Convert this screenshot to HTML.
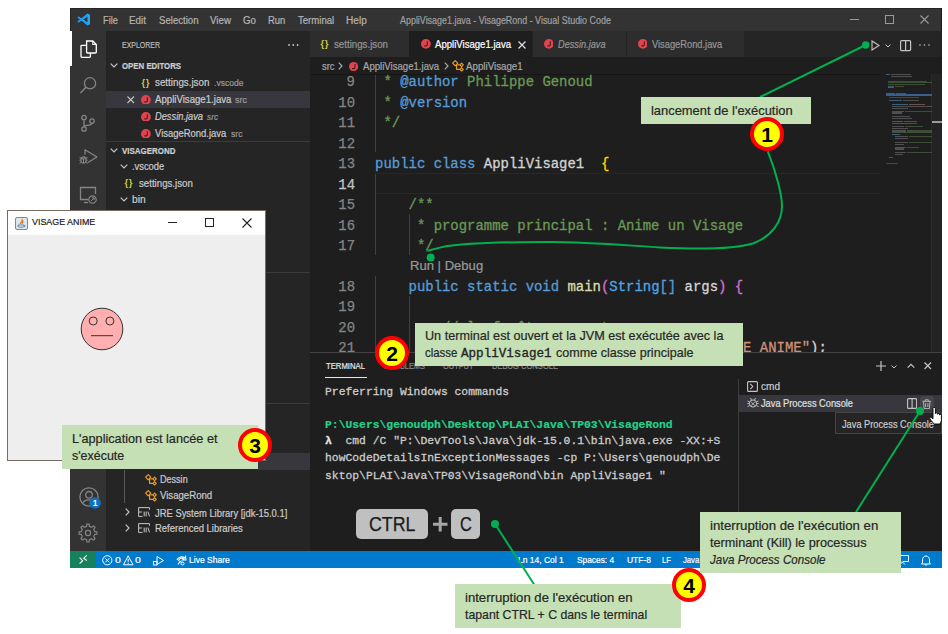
<!DOCTYPE html>
<html><head><meta charset="utf-8"><style>
html,body{margin:0;padding:0;background:#fff;width:948px;height:634px;overflow:hidden;position:relative}
.t{position:absolute;white-space:pre;-webkit-text-stroke-width:0.2px}
.r{position:absolute}
</style></head><body>
<div class="r" style="left:70px;top:8px;width:872px;height:23px;background:#333333;"></div>
<div class="r" style="left:70px;top:8px;width:872px;height:1px;background:#252525;"></div>
<div class="r" style="left:70px;top:8px;width:1px;height:23px;background:#252525;"></div>
<div class="r" style="left:941px;top:8px;width:1px;height:543px;background:#1a1a1a;"></div>
<div class="r" style="left:70px;top:31px;width:36px;height:520px;background:#333333;"></div>
<div class="r" style="left:106px;top:31px;width:204px;height:520px;background:#252526;"></div>
<div class="r" style="left:310px;top:31px;width:632px;height:520px;background:#1e1e1e;"></div>
<div class="r" style="left:310px;top:31px;width:632px;height:26px;background:#252526;"></div>
<div class="r" style="left:70px;top:551px;width:872px;height:17px;background:#007acc;"></div>
<div class="r" style="left:70px;top:551px;width:26px;height:17px;background:#16825d;"></div>
<div class="t" style="left:102.5px;top:15.5px;font-size:10px;line-height:10px;color:#b4b4b4;font-weight:normal;font-style:normal;font-family:'Liberation Sans', sans-serif;letter-spacing:0px;transform:scaleX(0.9255);transform-origin:0 0;">File</div>
<div class="t" style="left:129.4px;top:15.5px;font-size:10px;line-height:10px;color:#b4b4b4;font-weight:normal;font-style:normal;font-family:'Liberation Sans', sans-serif;letter-spacing:0px;transform:scaleX(0.9884);transform-origin:0 0;">Edit</div>
<div class="t" style="left:158.5px;top:15.5px;font-size:10px;line-height:10px;color:#b4b4b4;font-weight:normal;font-style:normal;font-family:'Liberation Sans', sans-serif;letter-spacing:0px;transform:scaleX(0.9611);transform-origin:0 0;">Selection</div>
<div class="t" style="left:210.0px;top:15.5px;font-size:10px;line-height:10px;color:#b4b4b4;font-weight:normal;font-style:normal;font-family:'Liberation Sans', sans-serif;letter-spacing:0px;transform:scaleX(0.9722);transform-origin:0 0;">View</div>
<div class="t" style="left:243.0px;top:15.5px;font-size:10px;line-height:10px;color:#b4b4b4;font-weight:normal;font-style:normal;font-family:'Liberation Sans', sans-serif;letter-spacing:0px;transform:scaleX(0.9774);transform-origin:0 0;">Go</div>
<div class="t" style="left:267.7px;top:15.5px;font-size:10px;line-height:10px;color:#b4b4b4;font-weight:normal;font-style:normal;font-family:'Liberation Sans', sans-serif;letter-spacing:0px;transform:scaleX(0.9454);transform-origin:0 0;">Run</div>
<div class="t" style="left:297.8px;top:15.5px;font-size:10px;line-height:10px;color:#b4b4b4;font-weight:normal;font-style:normal;font-family:'Liberation Sans', sans-serif;letter-spacing:0px;transform:scaleX(0.9577);transform-origin:0 0;">Terminal</div>
<div class="t" style="left:346.0px;top:15.5px;font-size:10px;line-height:10px;color:#b4b4b4;font-weight:normal;font-style:normal;font-family:'Liberation Sans', sans-serif;letter-spacing:0px;transform:scaleX(1.0097);transform-origin:0 0;">Help</div>
<div class="t" style="left:400.4px;top:15.7px;font-size:10px;line-height:10px;color:#a0a0a0;font-weight:normal;font-style:normal;font-family:'Liberation Sans', sans-serif;letter-spacing:0px;transform:scaleX(0.8925);transform-origin:0 0;">AppliVisage1.java - VisageRond - Visual Studio Code</div>
<svg class="r" style="left:77px;top:13px;" width="14" height="13" viewBox="0 0 14 13"><path d="M10.5 0.5 L13 1.7 V11.3 L10.5 12.5 L3.3 6.5 Z M10.5 3.8 L6 6.5 L10.5 9.2 Z" fill="#23a9f2"/><path d="M1 4 L10.5 11 M1 9 L10.5 2" stroke="#1f9cf0" stroke-width="1.8"/></svg>
<div class="r" style="left:850px;top:19px;width:9px;height:1px;background:#9a9a9a;"></div>
<svg class="r" style="left:885px;top:15px;" width="9" height="9" viewBox="0 0 9 9"><rect x="0.5" y="0.5" width="8" height="8" fill="none" stroke="#9a9a9a" stroke-width="1"/></svg>
<svg class="r" style="left:920px;top:15px;" width="9" height="9" viewBox="0 0 9 9"><path d="M0.5 0.5 L8.5 8.5 M8.5 0.5 L0.5 8.5" stroke="#9a9a9a" stroke-width="1.1"/></svg>
<div class="r" style="left:70px;top:31px;width:2px;height:35px;background:#ffffff;"></div>
<svg class="r" style="left:79px;top:39px;" width="19" height="20" viewBox="0 0 19 20"><path d="M7.6 2 H13.8 L17.3 5.5 V13.2 Q17.3 14 16.5 14 H8.4 Q7.6 14 7.6 13.2 Z" fill="none" stroke="#fff" stroke-width="1.3"/><path d="M13.8 2 V5.5 H17.3" fill="none" stroke="#fff" stroke-width="1.1"/><path d="M7.6 6.3 H2.8 Q2 6.3 2 7.1 V17.6 Q2 18.4 2.8 18.4 H10.6 Q11.4 18.4 11.4 17.6 V14" fill="none" stroke="#fff" stroke-width="1.3"/></svg>
<svg class="r" style="left:79px;top:77px;" width="18" height="18" viewBox="0 0 18 18"><circle cx="11" cy="6.3" r="5.6" fill="none" stroke="#858585" stroke-width="1.3"/><path d="M7 10.3 L1.3 16" stroke="#858585" stroke-width="1.5"/></svg>
<svg class="r" style="left:79px;top:114px;" width="18" height="19" viewBox="0 0 18 19"><circle cx="5" cy="3.5" r="2.2" fill="none" stroke="#858585" stroke-width="1.3"/><circle cx="5" cy="15" r="2.2" fill="none" stroke="#858585" stroke-width="1.3"/><circle cx="13" cy="7" r="2.2" fill="none" stroke="#858585" stroke-width="1.3"/><path d="M5 5.7 V12.8 M13 9.2 C13 12 5 11 5 12.8" fill="none" stroke="#858585" stroke-width="1.3"/></svg>
<svg class="r" style="left:79px;top:149px;" width="19" height="16" viewBox="0 0 19 16"><path d="M6 5.5 V0.8 L18 8 L8.5 13.8" fill="none" stroke="#858585" stroke-width="1.3" stroke-linejoin="round"/><ellipse cx="4.5" cy="11" rx="2.6" ry="3.2" fill="none" stroke="#858585" stroke-width="1.2"/><path d="M0.5 8.5 L2.2 9.3 M8.5 8.5 L6.8 9.3 M0.3 11.2 H1.9 M8.7 11.2 H7.1 M0.6 14.5 L2.2 13.2 M8.4 14.5 L6.8 13.2 M2.2 9.8 H6.8 M4.5 9.8 V14" stroke="#858585" stroke-width="1"/></svg>
<svg class="r" style="left:79px;top:186px;" width="19" height="19" viewBox="0 0 19 19"><path d="M9 13.5 H1.5 V1.5 H16.5 V8" fill="none" stroke="#858585" stroke-width="1.3"/><path d="M5 16.5 H9" stroke="#858585" stroke-width="1.3"/><circle cx="13.5" cy="13.5" r="3.7" fill="none" stroke="#858585" stroke-width="1.2"/><path d="M11.8 15.2 L15.2 11.8 M13 11.8 H15.2 V14" fill="none" stroke="#858585" stroke-width="1"/></svg>
<svg class="r" style="left:78.5px;top:486.5px;" width="20" height="20" viewBox="0 0 20 20"><circle cx="10" cy="10" r="9.1" fill="none" stroke="#858585" stroke-width="1.3"/><circle cx="10" cy="7.8" r="3.3" fill="none" stroke="#858585" stroke-width="1.3"/><path d="M4 15.8 C5.5 11.8 14.5 11.8 16 15.8" fill="none" stroke="#858585" stroke-width="1.3"/></svg>
<svg class="r" style="left:88.5px;top:496.5px;" width="12" height="12" viewBox="0 0 12 12"><circle cx="6" cy="6" r="5.8" fill="#0e70c0"/><text x="6" y="9.3" font-size="8.5" font-weight="bold" text-anchor="middle" fill="#fff" font-family="Liberation Sans">1</text></svg>
<svg class="r" style="left:78.2px;top:523px;" width="20" height="20" viewBox="0 0 20 20"><path d="M16.65 8.57 L18.93 8.87 L18.93 11.13 L16.65 11.43 L15.71 13.69 L17.11 15.52 L15.52 17.11 L13.69 15.71 L11.43 16.65 L11.13 18.93 L8.87 18.93 L8.57 16.65 L6.31 15.71 L4.48 17.11 L2.89 15.52 L4.29 13.69 L3.35 11.43 L1.07 11.13 L1.07 8.87 L3.35 8.57 L4.29 6.31 L2.89 4.48 L4.48 2.89 L6.31 4.29 L8.57 3.35 L8.87 1.07 L11.13 1.07 L11.43 3.35 L13.69 4.29 L15.52 2.89 L17.11 4.48 L15.71 6.31 Z" fill="none" stroke="#858585" stroke-width="1.2" stroke-linejoin="round"/><circle cx="10" cy="10" r="2.6" fill="none" stroke="#858585" stroke-width="1.2"/></svg>
<div class="t" style="left:121.8px;top:41.3px;font-size:8.5px;line-height:8.5px;color:#bbbbbb;font-weight:normal;font-style:normal;font-family:'Liberation Sans', sans-serif;letter-spacing:0px;transform:scaleX(0.8203);transform-origin:0 0;">EXPLORER</div>
<svg class="r" style="left:287.5px;top:43.8px;" width="12" height="2" viewBox="0 0 12 2"><circle cx="1.0" cy="1" r="0.9" fill="#c5c5c5"/><circle cx="5.3" cy="1" r="0.9" fill="#c5c5c5"/><circle cx="9.6" cy="1" r="0.9" fill="#c5c5c5"/></svg>
<svg class="r" style="left:110px;top:63.400000000000006px;" width="8" height="5" viewBox="0 0 8 5"><path d="M0.7 0.7 L4 4 L7.3 0.7" fill="none" stroke="#c5c5c5" stroke-width="1.2"/></svg>
<div class="t" style="left:121.8px;top:62.4px;font-size:8.5px;line-height:8.5px;color:#cccccc;font-weight:bold;font-style:normal;font-family:'Liberation Sans', sans-serif;letter-spacing:0px;transform:scaleX(0.9221);transform-origin:0 0;">OPEN EDITORS</div>
<div class="r" style="left:106px;top:91px;width:204px;height:17px;background:#37373d;"></div>
<div class="t" style="left:141.5px;top:77.5px;font-size:9.5px;line-height:9.5px;color:#cbcb41;font-weight:bold;font-style:normal;font-family:'Liberation Sans', sans-serif;letter-spacing:0.6px;-webkit-text-stroke-width:0;">{}</div>
<div class="t" style="left:155.0px;top:78.4px;font-size:10px;line-height:10px;color:#cccccc;font-weight:normal;font-style:normal;font-family:'Liberation Sans', sans-serif;letter-spacing:0px;transform:scaleX(0.9784);transform-origin:0 0;">settings.json</div>
<div class="t" style="left:213.6px;top:78.8px;font-size:8.5px;line-height:8.5px;color:#9a9a9a;font-weight:normal;font-style:normal;font-family:'Liberation Sans', sans-serif;letter-spacing:0px;transform:scaleX(1.0060);transform-origin:0 0;">.vscode</div>
<svg class="r" style="left:127px;top:96px;" width="8" height="8" viewBox="0 0 8 8"><path d="M0.5 0.5 L7 7 M7 0.5 L0.5 7" stroke="#c5c5c5" stroke-width="1.1"/></svg>
<svg class="r" style="left:141.1px;top:94.69999999999999px;" width="9.8" height="9.8" viewBox="0 0 9.8 9.8"><circle cx="4.9" cy="4.9" r="4.9" fill="#e0444c"/><path d="M6.300000000000001 2.3000000000000003 V5.800000000000001 Q6.300000000000001 6.9 5.2 6.9 H3.3000000000000003" fill="none" stroke="#4a1a22" stroke-width="1.1"/></svg>
<div class="t" style="left:155.0px;top:95.3px;font-size:10px;line-height:10px;color:#cccccc;font-weight:normal;font-style:normal;font-family:'Liberation Sans', sans-serif;letter-spacing:0px;transform:scaleX(0.9635);transform-origin:0 0;">AppliVisage1.java</div>
<div class="t" style="left:235.0px;top:95.7px;font-size:8.5px;line-height:8.5px;color:#9a9a9a;font-weight:normal;font-style:normal;font-family:'Liberation Sans', sans-serif;letter-spacing:0px;transform:scaleX(1.0615);transform-origin:0 0;">src</div>
<svg class="r" style="left:141.1px;top:111.6px;" width="9.8" height="9.8" viewBox="0 0 9.8 9.8"><circle cx="4.9" cy="4.9" r="4.9" fill="#e0444c"/><path d="M6.300000000000001 2.3000000000000003 V5.800000000000001 Q6.300000000000001 6.9 5.2 6.9 H3.3000000000000003" fill="none" stroke="#4a1a22" stroke-width="1.1"/></svg>
<div class="t" style="left:155.0px;top:112.2px;font-size:10px;line-height:10px;color:#cccccc;font-weight:normal;font-style:italic;font-family:'Liberation Sans', sans-serif;letter-spacing:0px;transform:scaleX(0.9284);transform-origin:0 0;">Dessin.java</div>
<div class="t" style="left:206.8px;top:112.6px;font-size:8.5px;line-height:8.5px;color:#9a9a9a;font-weight:normal;font-style:italic;font-family:'Liberation Sans', sans-serif;letter-spacing:0px;transform:scaleX(0.9730);transform-origin:0 0;">src</div>
<svg class="r" style="left:141.1px;top:128.5px;" width="9.8" height="9.8" viewBox="0 0 9.8 9.8"><circle cx="4.9" cy="4.9" r="4.9" fill="#e0444c"/><path d="M6.300000000000001 2.3000000000000003 V5.800000000000001 Q6.300000000000001 6.9 5.2 6.9 H3.3000000000000003" fill="none" stroke="#4a1a22" stroke-width="1.1"/></svg>
<div class="t" style="left:155.0px;top:129.1px;font-size:10px;line-height:10px;color:#cccccc;font-weight:normal;font-style:normal;font-family:'Liberation Sans', sans-serif;letter-spacing:0px;transform:scaleX(0.9444);transform-origin:0 0;">VisageRond.java</div>
<div class="t" style="left:230.5px;top:129.5px;font-size:8.5px;line-height:8.5px;color:#9a9a9a;font-weight:normal;font-style:normal;font-family:'Liberation Sans', sans-serif;letter-spacing:0px;transform:scaleX(1.0172);transform-origin:0 0;">src</div>
<div class="r" style="left:106px;top:141px;width:204px;height:1px;background:#3c3c3c;"></div>
<svg class="r" style="left:110px;top:147.8px;" width="8" height="5" viewBox="0 0 8 5"><path d="M0.7 0.7 L4 4 L7.3 0.7" fill="none" stroke="#c5c5c5" stroke-width="1.2"/></svg>
<div class="t" style="left:121.8px;top:146.8px;font-size:8.5px;line-height:8.5px;color:#cccccc;font-weight:bold;font-style:normal;font-family:'Liberation Sans', sans-serif;letter-spacing:0px;transform:scaleX(0.9349);transform-origin:0 0;">VISAGEROND</div>
<svg class="r" style="left:120px;top:164.3px;" width="8" height="5" viewBox="0 0 8 5"><path d="M0.7 0.7 L4 4 L7.3 0.7" fill="none" stroke="#c5c5c5" stroke-width="1.2"/></svg>
<div class="t" style="left:132.4px;top:161.6px;font-size:10px;line-height:10px;color:#cccccc;font-weight:normal;font-style:normal;font-family:'Liberation Sans', sans-serif;letter-spacing:0px;transform:scaleX(0.9333);transform-origin:0 0;">.vscode</div>
<div class="t" style="left:124.5px;top:177.8px;font-size:9.5px;line-height:9.5px;color:#cbcb41;font-weight:bold;font-style:normal;font-family:'Liberation Sans', sans-serif;letter-spacing:0.6px;-webkit-text-stroke-width:0;">{}</div>
<div class="t" style="left:138.7px;top:178.7px;font-size:10px;line-height:10px;color:#cccccc;font-weight:normal;font-style:normal;font-family:'Liberation Sans', sans-serif;letter-spacing:0px;transform:scaleX(0.9676);transform-origin:0 0;">settings.json</div>
<svg class="r" style="left:120px;top:197.4px;" width="8" height="5" viewBox="0 0 8 5"><path d="M0.7 0.7 L4 4 L7.3 0.7" fill="none" stroke="#c5c5c5" stroke-width="1.2"/></svg>
<div class="t" style="left:132.4px;top:194.7px;font-size:10px;line-height:10px;color:#cccccc;font-weight:normal;font-style:normal;font-family:'Liberation Sans', sans-serif;letter-spacing:0px;transform:scaleX(1.0226);transform-origin:0 0;">bin</div>
<div class="r" style="left:265px;top:272px;width:45px;height:1px;background:#3c3c3c;"></div>
<div class="r" style="left:265px;top:403px;width:45px;height:1px;background:#3c3c3c;"></div>
<div class="r" style="left:258px;top:453px;width:52px;height:17px;background:#37373d;"></div>
<div class="r" style="left:124px;top:470px;width:1px;height:33px;background:#585858;"></div>
<svg class="r" style="left:144.5px;top:473.5px;" width="12" height="12" viewBox="0 0 12 12"><path d="M3.2 0.6 L5.8 3.2 L3.2 5.8 L0.6 3.2 Z M9.6 3.2 L11.3 4.9 L9.6 6.6 L7.9 4.9 Z M9.6 7.6 L11.3 9.3 L9.6 11 L7.9 9.3 Z M4.6 4.6 V9.3 H7.9 M5.5 4.9 H7.9" fill="none" stroke="#ee9d28" stroke-width="1.15" stroke-linejoin="round"/></svg>
<div class="t" style="left:160.3px;top:475.1px;font-size:10px;line-height:10px;color:#cccccc;font-weight:normal;font-style:normal;font-family:'Liberation Sans', sans-serif;letter-spacing:0px;transform:scaleX(0.9052);transform-origin:0 0;">Dessin</div>
<svg class="r" style="left:144.5px;top:490px;" width="12" height="12" viewBox="0 0 12 12"><path d="M3.2 0.6 L5.8 3.2 L3.2 5.8 L0.6 3.2 Z M9.6 3.2 L11.3 4.9 L9.6 6.6 L7.9 4.9 Z M9.6 7.6 L11.3 9.3 L9.6 11 L7.9 9.3 Z M4.6 4.6 V9.3 H7.9 M5.5 4.9 H7.9" fill="none" stroke="#ee9d28" stroke-width="1.15" stroke-linejoin="round"/></svg>
<div class="t" style="left:160.3px;top:490.7px;font-size:10px;line-height:10px;color:#cccccc;font-weight:normal;font-style:normal;font-family:'Liberation Sans', sans-serif;letter-spacing:0px;transform:scaleX(0.9613);transform-origin:0 0;">VisageRond</div>
<svg class="r" style="left:125px;top:508px;" width="5" height="8" viewBox="0 0 5 8"><path d="M0.7 0.7 L4 4 L0.7 7.3" fill="none" stroke="#c5c5c5" stroke-width="1.2"/></svg>
<svg class="r" style="left:125px;top:524.4px;" width="5" height="8" viewBox="0 0 5 8"><path d="M0.7 0.7 L4 4 L0.7 7.3" fill="none" stroke="#c5c5c5" stroke-width="1.2"/></svg>
<svg class="r" style="left:137.8px;top:507px;" width="12.5" height="10" viewBox="0 0 12.5 10"><path d="M0.6 9.4 V0.6 H11.4 V2.8 M0.6 9.4 H4.6 M0.6 5 H4 M6.2 4.6 V9.4 M8.2 4.6 V9.4 M9.9 4.6 L11.5 9.4" fill="none" stroke="#c5c5c5" stroke-width="1"/></svg>
<div class="t" style="left:154.7px;top:508.5px;font-size:10px;line-height:10px;color:#cccccc;font-weight:normal;font-style:normal;font-family:'Liberation Sans', sans-serif;letter-spacing:0px;transform:scaleX(0.9410);transform-origin:0 0;">JRE System Library [jdk-15.0.1]</div>
<svg class="r" style="left:137.8px;top:523.4px;" width="12.5" height="10" viewBox="0 0 12.5 10"><path d="M0.6 9.4 V0.6 H11.4 V2.8 M0.6 9.4 H4.6 M0.6 5 H4 M6.2 4.6 V9.4 M8.2 4.6 V9.4 M9.9 4.6 L11.5 9.4" fill="none" stroke="#c5c5c5" stroke-width="1"/></svg>
<div class="t" style="left:154.7px;top:524.0px;font-size:10px;line-height:10px;color:#cccccc;font-weight:normal;font-style:normal;font-family:'Liberation Sans', sans-serif;letter-spacing:0px;transform:scaleX(0.9461);transform-origin:0 0;">Referenced Libraries</div>
<div class="r" style="left:310px;top:31px;width:99px;height:26px;background:#2d2d2d;"></div>
<div class="r" style="left:409px;top:31px;width:123px;height:26px;background:#1e1e1e;"></div>
<div class="r" style="left:533px;top:31px;width:93px;height:26px;background:#2d2d2d;"></div>
<div class="r" style="left:627px;top:31px;width:117px;height:26px;background:#2d2d2d;"></div>
<div class="t" style="left:320.5px;top:39.3px;font-size:9.5px;line-height:9.5px;color:#cbcb41;font-weight:bold;font-style:normal;font-family:'Liberation Sans', sans-serif;letter-spacing:0.6px;-webkit-text-stroke-width:0;">{}</div>
<div class="t" style="left:334.0px;top:40.1px;font-size:10px;line-height:10px;color:#969696;font-weight:normal;font-style:normal;font-family:'Liberation Sans', sans-serif;letter-spacing:0px;transform:scaleX(0.9712);transform-origin:0 0;">settings.json</div>
<svg class="r" style="left:420.8px;top:38.9px;" width="9.8" height="9.8" viewBox="0 0 9.8 9.8"><circle cx="4.9" cy="4.9" r="4.9" fill="#e0444c"/><path d="M6.300000000000001 2.3000000000000003 V5.800000000000001 Q6.300000000000001 6.9 5.2 6.9 H3.3000000000000003" fill="none" stroke="#4a1a22" stroke-width="1.1"/></svg>
<div class="t" style="left:434.9px;top:40.1px;font-size:10px;line-height:10px;color:#ffffff;font-weight:normal;font-style:normal;font-family:'Liberation Sans', sans-serif;letter-spacing:0px;transform:scaleX(0.9584);transform-origin:0 0;">AppliVisage1.java</div>
<svg class="r" style="left:518px;top:40.5px;" width="8" height="8" viewBox="0 0 8 8"><path d="M0.5 0.5 L7.5 7.5 M7.5 0.5 L0.5 7.5" stroke="#e0e0e0" stroke-width="1.2"/></svg>
<svg class="r" style="left:543.6px;top:38.9px;" width="9.8" height="9.8" viewBox="0 0 9.8 9.8"><circle cx="4.9" cy="4.9" r="4.9" fill="#e0444c"/><path d="M6.300000000000001 2.3000000000000003 V5.800000000000001 Q6.300000000000001 6.9 5.2 6.9 H3.3000000000000003" fill="none" stroke="#4a1a22" stroke-width="1.1"/></svg>
<div class="t" style="left:557.5px;top:40.1px;font-size:10px;line-height:10px;color:#969696;font-weight:normal;font-style:italic;font-family:'Liberation Sans', sans-serif;letter-spacing:0px;transform:scaleX(0.9188);transform-origin:0 0;">Dessin.java</div>
<svg class="r" style="left:637.6px;top:38.9px;" width="9.8" height="9.8" viewBox="0 0 9.8 9.8"><circle cx="4.9" cy="4.9" r="4.9" fill="#e0444c"/><path d="M6.300000000000001 2.3000000000000003 V5.800000000000001 Q6.300000000000001 6.9 5.2 6.9 H3.3000000000000003" fill="none" stroke="#4a1a22" stroke-width="1.1"/></svg>
<div class="t" style="left:651.8px;top:40.1px;font-size:10px;line-height:10px;color:#969696;font-weight:normal;font-style:normal;font-family:'Liberation Sans', sans-serif;letter-spacing:0px;transform:scaleX(0.9298);transform-origin:0 0;">VisageRond.java</div>
<svg class="r" style="left:871px;top:39.8px;" width="10" height="11" viewBox="0 0 10 11"><path d="M1 1 L8 5.5 L1 10 Z" fill="none" stroke="#c5c5c5" stroke-width="1.1"/></svg>
<svg class="r" style="left:884.7px;top:43.8px;" width="6" height="4" viewBox="0 0 6 4"><path d="M0.5 0.5 L3 3 L5.5 0.5" fill="none" stroke="#c5c5c5" stroke-width="1"/></svg>
<svg class="r" style="left:899.5px;top:39.5px;" width="12" height="12" viewBox="0 0 12 12"><rect x="0.6" y="0.6" width="10" height="10" rx="1" fill="none" stroke="#c5c5c5" stroke-width="1.2"/><path d="M5.6 0.6 V10.6" stroke="#c5c5c5" stroke-width="1.2"/></svg>
<svg class="r" style="left:919px;top:44px;" width="12" height="2" viewBox="0 0 12 2"><circle cx="1.0" cy="1" r="0.8" fill="#c5c5c5"/><circle cx="5.5" cy="1" r="0.8" fill="#c5c5c5"/><circle cx="10.0" cy="1" r="0.8" fill="#c5c5c5"/></svg>
<div class="t" style="left:321.5px;top:61.0px;font-size:10.5px;line-height:10.5px;color:#a9a9a9;font-weight:normal;font-style:normal;font-family:'Liberation Sans', sans-serif;letter-spacing:0px;transform:scaleX(0.8951);transform-origin:0 0;">src</div>
<svg class="r" style="left:337.7px;top:62.400000000000006px;" width="5" height="8" viewBox="0 0 5 8"><path d="M0.7 0.7 L4 4 L0.7 7.3" fill="none" stroke="#a9a9a9" stroke-width="1.2"/></svg>
<svg class="r" style="left:349.0px;top:61.99999999999999px;" width="9.2" height="9.2" viewBox="0 0 9.2 9.2"><circle cx="4.6" cy="4.6" r="4.6" fill="#e0444c"/><path d="M6.0 1.9999999999999996 V5.5 Q6.0 6.6 4.8999999999999995 6.6 H2.9999999999999996" fill="none" stroke="#4a1a22" stroke-width="1.1"/></svg>
<div class="t" style="left:362.8px;top:61.0px;font-size:10.5px;line-height:10.5px;color:#a9a9a9;font-weight:normal;font-style:normal;font-family:'Liberation Sans', sans-serif;letter-spacing:0px;transform:scaleX(0.9140);transform-origin:0 0;">AppliVisage1.java</div>
<svg class="r" style="left:443.5px;top:62.400000000000006px;" width="5" height="8" viewBox="0 0 5 8"><path d="M0.7 0.7 L4 4 L0.7 7.3" fill="none" stroke="#a9a9a9" stroke-width="1.2"/></svg>
<svg class="r" style="left:452px;top:59.8px;" width="12" height="12" viewBox="0 0 12 12"><path d="M3.2 0.6 L5.8 3.2 L3.2 5.8 L0.6 3.2 Z M9.6 3.2 L11.3 4.9 L9.6 6.6 L7.9 4.9 Z M9.6 7.6 L11.3 9.3 L9.6 11 L7.9 9.3 Z M4.6 4.6 V9.3 H7.9 M5.5 4.9 H7.9" fill="none" stroke="#ee9d28" stroke-width="1.15" stroke-linejoin="round"/></svg>
<div class="t" style="left:465.7px;top:61.0px;font-size:10.5px;line-height:10.5px;color:#a9a9a9;font-weight:normal;font-style:normal;font-family:'Liberation Sans', sans-serif;letter-spacing:0px;transform:scaleX(0.9278);transform-origin:0 0;">AppliVisage1</div>
<div class="r" style="left:310px;top:74px;width:570px;height:1px;background:#161616;"></div>
<div class="r" style="left:375px;top:173px;width:505px;height:1px;background:#282828;"></div>
<div class="r" style="left:375px;top:193px;width:505px;height:1px;background:#282828;"></div>
<div class="r" style="left:375px;top:75px;width:1px;height:77px;background:#404040;"></div>
<div class="r" style="left:375px;top:174px;width:1px;height:81px;background:#404040;"></div>
<div class="r" style="left:375px;top:276px;width:1px;height:76px;background:#404040;"></div>
<div class="r" style="left:409px;top:214px;width:1px;height:41px;background:#404040;"></div>
<div class="r" style="left:409px;top:296px;width:1px;height:56px;background:#404040;"></div>
<div class="t" style="left:346.6px;top:76.1px;font-size:13.943px;line-height:13.943px;color:#858585;font-weight:normal;font-style:normal;font-family:'Liberation Mono', monospace;letter-spacing:0px;-webkit-text-stroke-width:0.25px;">9</div>
<div class="t" style="left:338.3px;top:96.6px;font-size:13.943px;line-height:13.943px;color:#858585;font-weight:normal;font-style:normal;font-family:'Liberation Mono', monospace;letter-spacing:0px;-webkit-text-stroke-width:0.25px;">10</div>
<div class="t" style="left:338.3px;top:117.1px;font-size:13.943px;line-height:13.943px;color:#858585;font-weight:normal;font-style:normal;font-family:'Liberation Mono', monospace;letter-spacing:0px;-webkit-text-stroke-width:0.25px;">11</div>
<div class="t" style="left:338.3px;top:137.6px;font-size:13.943px;line-height:13.943px;color:#858585;font-weight:normal;font-style:normal;font-family:'Liberation Mono', monospace;letter-spacing:0px;-webkit-text-stroke-width:0.25px;">12</div>
<div class="t" style="left:338.3px;top:158.0px;font-size:13.943px;line-height:13.943px;color:#858585;font-weight:normal;font-style:normal;font-family:'Liberation Mono', monospace;letter-spacing:0px;-webkit-text-stroke-width:0.25px;">13</div>
<div class="t" style="left:338.3px;top:178.5px;font-size:13.943px;line-height:13.943px;color:#c6c6c6;font-weight:normal;font-style:normal;font-family:'Liberation Mono', monospace;letter-spacing:0px;-webkit-text-stroke-width:0.25px;">14</div>
<div class="t" style="left:338.3px;top:199.0px;font-size:13.943px;line-height:13.943px;color:#858585;font-weight:normal;font-style:normal;font-family:'Liberation Mono', monospace;letter-spacing:0px;-webkit-text-stroke-width:0.25px;">15</div>
<div class="t" style="left:338.3px;top:219.5px;font-size:13.943px;line-height:13.943px;color:#858585;font-weight:normal;font-style:normal;font-family:'Liberation Mono', monospace;letter-spacing:0px;-webkit-text-stroke-width:0.25px;">16</div>
<div class="t" style="left:338.3px;top:240.0px;font-size:13.943px;line-height:13.943px;color:#858585;font-weight:normal;font-style:normal;font-family:'Liberation Mono', monospace;letter-spacing:0px;-webkit-text-stroke-width:0.25px;">17</div>
<div class="t" style="left:338.3px;top:280.9px;font-size:13.943px;line-height:13.943px;color:#858585;font-weight:normal;font-style:normal;font-family:'Liberation Mono', monospace;letter-spacing:0px;-webkit-text-stroke-width:0.25px;">18</div>
<div class="t" style="left:338.3px;top:301.4px;font-size:13.943px;line-height:13.943px;color:#858585;font-weight:normal;font-style:normal;font-family:'Liberation Mono', monospace;letter-spacing:0px;-webkit-text-stroke-width:0.25px;">19</div>
<div class="t" style="left:338.3px;top:321.9px;font-size:13.943px;line-height:13.943px;color:#858585;font-weight:normal;font-style:normal;font-family:'Liberation Mono', monospace;letter-spacing:0px;-webkit-text-stroke-width:0.25px;">20</div>
<div class="t" style="left:338.3px;top:342.4px;font-size:13.943px;line-height:13.943px;color:#858585;font-weight:normal;font-style:normal;font-family:'Liberation Mono', monospace;letter-spacing:0px;-webkit-text-stroke-width:0.25px;">21</div>
<div class="t" style="left:375.1px;top:76.1px;font-size:13.943px;line-height:13.943px;color:#d4d4d4;font-weight:normal;font-style:normal;font-family:'Liberation Mono', monospace;letter-spacing:0px;-webkit-text-stroke-width:0.3px;"><span style="color:#6a9955"> * </span><span style="color:#569cd6">@author</span><span style="color:#6a9955"> Philippe Genoud</span></div>
<div class="t" style="left:375.1px;top:96.6px;font-size:13.943px;line-height:13.943px;color:#d4d4d4;font-weight:normal;font-style:normal;font-family:'Liberation Mono', monospace;letter-spacing:0px;-webkit-text-stroke-width:0.3px;"><span style="color:#6a9955"> * </span><span style="color:#569cd6">@version</span></div>
<div class="t" style="left:375.1px;top:117.1px;font-size:13.943px;line-height:13.943px;color:#d4d4d4;font-weight:normal;font-style:normal;font-family:'Liberation Mono', monospace;letter-spacing:0px;-webkit-text-stroke-width:0.3px;"><span style="color:#6a9955"> */</span></div>
<div class="t" style="left:375.1px;top:158.0px;font-size:13.943px;line-height:13.943px;color:#d4d4d4;font-weight:normal;font-style:normal;font-family:'Liberation Mono', monospace;letter-spacing:0px;-webkit-text-stroke-width:0.3px;"><span style="color:#569cd6">public class </span><span style="color:#d4d4d4">AppliVisage1</span><span style="color:#d4d4d4">  </span><span style="color:#ffd700">{</span></div>
<div class="t" style="left:375.1px;top:199.0px;font-size:13.943px;line-height:13.943px;color:#d4d4d4;font-weight:normal;font-style:normal;font-family:'Liberation Mono', monospace;letter-spacing:0px;-webkit-text-stroke-width:0.3px;"><span style="color:#6a9955">    /**</span></div>
<div class="t" style="left:375.1px;top:219.5px;font-size:13.943px;line-height:13.943px;color:#d4d4d4;font-weight:normal;font-style:normal;font-family:'Liberation Mono', monospace;letter-spacing:0px;-webkit-text-stroke-width:0.3px;"><span style="color:#6a9955">     * programme principal : Anime un Visage</span></div>
<div class="t" style="left:375.1px;top:240.0px;font-size:13.943px;line-height:13.943px;color:#d4d4d4;font-weight:normal;font-style:normal;font-family:'Liberation Mono', monospace;letter-spacing:0px;-webkit-text-stroke-width:0.3px;"><span style="color:#6a9955">     */</span></div>
<div class="t" style="left:409.6px;top:260.1px;font-size:12px;line-height:12px;color:#999999;font-weight:normal;font-style:normal;font-family:'Liberation Sans', sans-serif;letter-spacing:0px;transform:scaleX(1.0893);transform-origin:0 0;">Run | Debug</div>
<div class="t" style="left:375.1px;top:280.9px;font-size:13.943px;line-height:13.943px;color:#d4d4d4;font-weight:normal;font-style:normal;font-family:'Liberation Mono', monospace;letter-spacing:0px;-webkit-text-stroke-width:0.3px;"><span style="color:#569cd6">    public static void </span><span style="color:#dcdcaa">main</span><span style="color:#da70d6">(</span><span style="color:#4fa3e3">String</span><span style="color:#569cd6">[]</span><span style="color:#d4d4d4"> args</span><span style="color:#da70d6">)</span><span style="color:#d4d4d4"> </span><span style="color:#da70d6">{</span></div>
<div class="t" style="left:375.1px;top:321.9px;font-size:13.943px;line-height:13.943px;color:#d4d4d4;font-weight:normal;font-style:normal;font-family:'Liberation Mono', monospace;letter-spacing:0px;-webkit-text-stroke-width:0.3px;"><span style="color:#6a9955">        // la fenêtre ouverte</span></div>
<div class="t" style="left:375.1px;top:342.4px;font-size:13.943px;line-height:13.943px;color:#d4d4d4;font-weight:normal;font-style:normal;font-family:'Liberation Mono', monospace;letter-spacing:0px;-webkit-text-stroke-width:0.3px;"><span style="color:#d4d4d4">        JFrame laFenetre = new JFrame(</span><span style="color:#ce9178">"VISAGE ANIME"</span><span style="color:#d4d4d4">);</span></div>
<div class="r" style="left:310px;top:352px;width:632px;height:1px;background:#414141;"></div>
<div class="r" style="left:310px;top:353px;width:632px;height:198px;background:#1e1e1e;"></div>
<div class="t" style="left:326.4px;top:362.0px;font-size:8.5px;line-height:8.5px;color:#e7e7e7;font-weight:normal;font-style:normal;font-family:'Liberation Sans', sans-serif;letter-spacing:0px;transform:scaleX(0.9068);transform-origin:0 0;">TERMINAL</div>
<div class="r" style="left:325px;top:377px;width:42px;height:1px;background:#e7e7e7;"></div>
<div class="t" style="left:383.8px;top:362.0px;font-size:8.5px;line-height:8.5px;color:#8b8b8b;font-weight:normal;font-style:normal;font-family:'Liberation Sans', sans-serif;letter-spacing:0px;transform:scaleX(0.8654);transform-origin:0 0;">PROBLEMS</div>
<div class="t" style="left:443.0px;top:362.0px;font-size:8.5px;line-height:8.5px;color:#8b8b8b;font-weight:normal;font-style:normal;font-family:'Liberation Sans', sans-serif;letter-spacing:0px;transform:scaleX(0.8730);transform-origin:0 0;">OUTPUT</div>
<div class="t" style="left:492.0px;top:362.0px;font-size:8.5px;line-height:8.5px;color:#8b8b8b;font-weight:normal;font-style:normal;font-family:'Liberation Sans', sans-serif;letter-spacing:0px;transform:scaleX(0.8904);transform-origin:0 0;">DEBUG CONSOLE</div>
<svg class="r" style="left:876px;top:360.6px;" width="10" height="10" viewBox="0 0 10 10"><path d="M5 0 V10 M0 5 H10" stroke="#c5c5c5" stroke-width="1.2"/></svg>
<svg class="r" style="left:890.5px;top:364.5px;" width="6" height="4" viewBox="0 0 6 4"><path d="M0.5 0.5 L3 3 L5.5 0.5" fill="none" stroke="#c5c5c5" stroke-width="1"/></svg>
<svg class="r" style="left:907px;top:362.5px;" width="8" height="6" viewBox="0 0 8 6"><path d="M0.7 4.7 L4 1.4 L7.3 4.7" fill="none" stroke="#c5c5c5" stroke-width="1.2"/></svg>
<svg class="r" style="left:923.8px;top:362px;" width="8" height="8" viewBox="0 0 8 8"><path d="M0.5 0.5 L7 7 M7 0.5 L0.5 7" stroke="#c5c5c5" stroke-width="1.2"/></svg>
<div class="t" style="left:325.0px;top:386.5px;font-size:11.367px;line-height:11.367px;color:#cccccc;font-weight:normal;font-style:normal;font-family:'Liberation Mono', monospace;letter-spacing:0px;-webkit-text-stroke-width:0.3px;">Preferring Windows commands</div>
<div class="t" style="left:325.0px;top:419.6px;font-size:11.367px;line-height:11.367px;color:#23d18b;font-weight:bold;font-style:normal;font-family:'Liberation Mono', monospace;letter-spacing:0px;">P:\Users\genoudph\Desktop\PLAI\Java\TP03\VisageRond</div>
<div class="t" style="left:325.0px;top:436.2px;font-size:11.367px;line-height:11.367px;color:#cccccc;font-weight:normal;font-style:normal;font-family:'Liberation Mono', monospace;letter-spacing:0px;-webkit-text-stroke-width:0.3px;"><b style="color:#e5e5e5">λ</b>  cmd /C "P:\DevTools\Java\jdk-15.0.1\bin\java.exe -XX:+S</div>
<div class="t" style="left:325.0px;top:453.4px;font-size:11.367px;line-height:11.367px;color:#cccccc;font-weight:normal;font-style:normal;font-family:'Liberation Mono', monospace;letter-spacing:0px;-webkit-text-stroke-width:0.3px;">howCodeDetailsInExceptionMessages -cp P:\Users\genoudph\De</div>
<div class="t" style="left:325.0px;top:470.9px;font-size:11.367px;line-height:11.367px;color:#cccccc;font-weight:normal;font-style:normal;font-family:'Liberation Mono', monospace;letter-spacing:0px;-webkit-text-stroke-width:0.3px;">sktop\PLAI\Java\TP03\VisageRond\bin AppliVisage1 "</div>
<div class="r" style="left:738px;top:379px;width:1px;height:172px;background:#3c3c3c;"></div>
<svg class="r" style="left:746.8px;top:381.3px;" width="11" height="11" viewBox="0 0 11 11"><rect x="0.6" y="0.6" width="9.8" height="9.8" rx="1" fill="none" stroke="#c5c5c5" stroke-width="1.1"/><path d="M3.3 2.8 L5.8 5.5 L3.3 8.2" fill="none" stroke="#c5c5c5" stroke-width="1.1"/></svg>
<div class="t" style="left:761.0px;top:381.4px;font-size:10.5px;line-height:10.5px;color:#cccccc;font-weight:normal;font-style:normal;font-family:'Liberation Sans', sans-serif;letter-spacing:0px;transform:scaleX(0.9574);transform-origin:0 0;">cmd</div>
<div class="r" style="left:739px;top:395px;width:203px;height:17px;background:#37373d;"></div>
<svg class="r" style="left:746.6px;top:397.3px;" width="12" height="12" viewBox="0 0 12 12"><circle cx="6" cy="6.5" r="3.6" fill="none" stroke="#c5c5c5" stroke-width="1"/><path d="M0.5 4 L2.6 5 M11.5 4 L9.4 5 M0.5 9.5 L2.6 8.5 M11.5 9.5 L9.4 8.5 M0.3 6.5 H2.4 M11.7 6.5 H9.6 M3.5 1 L4.5 3 M8.5 1 L7.5 3 M4.2 5 L7.8 8.5 M7.8 5 L4.2 8.5" stroke="#c5c5c5" stroke-width="0.9"/></svg>
<div class="t" style="left:761.0px;top:398.2px;font-size:10.5px;line-height:10.5px;color:#e0e0e0;font-weight:normal;font-style:normal;font-family:'Liberation Sans', sans-serif;letter-spacing:0px;transform:scaleX(0.8806);transform-origin:0 0;">Java Process Console</div>
<svg class="r" style="left:906.6px;top:398.2px;" width="10.5" height="11" viewBox="0 0 10.5 11"><rect x="0.6" y="0.6" width="9" height="9.8" rx="1" fill="none" stroke="#c5c5c5" stroke-width="1.1"/><path d="M5.1 0.6 V10.4" stroke="#c5c5c5" stroke-width="1.1"/></svg>
<div class="r" style="left:920px;top:396px;width:14px;height:14px;background:#45454b;border-radius:3px"></div>
<svg class="r" style="left:922px;top:398.5px;" width="10" height="10" viewBox="0 0 10 10"><path d="M0.5 2.3 H9 M3.2 2.3 V0.8 H6.3 V2.3 M1.5 2.3 L2.1 9.6 H7.4 L8 2.3 M3.6 4.2 V8 M5.9 4.2 V8" fill="none" stroke="#b8b8b8" stroke-width="0.95"/></svg>
<div class="r" style="left:835px;top:412px;width:107px;height:22px;background:#454545;"></div>
<div class="r" style="left:836px;top:413px;width:105px;height:20px;background:#252526;"></div>
<div class="t" style="left:842.0px;top:418.6px;font-size:10.5px;line-height:10.5px;color:#cccccc;font-weight:normal;font-style:normal;font-family:'Liberation Sans', sans-serif;letter-spacing:0px;transform:scaleX(0.8806);transform-origin:0 0;">Java Process Console</div>
<svg class="r" style="left:79px;top:554px;" width="10" height="11" viewBox="0 0 10 11"><path d="M0.6 3.6 L3.6 6.7 L0.6 9.7 M7.8 1.3 L4.7 4.1 L7.8 6.5" fill="none" stroke="#fff" stroke-width="1.1"/></svg>
<svg class="r" style="left:101.8px;top:554.7px;" width="11" height="11" viewBox="0 0 11 11"><circle cx="5.3" cy="5.3" r="4.6" fill="none" stroke="#fff" stroke-width="1"/><path d="M3.3 3.3 L7.3 7.3 M7.3 3.3 L3.3 7.3" stroke="#fff" stroke-width="1"/></svg>
<div class="t" style="left:114.7px;top:555.6px;font-size:9px;line-height:9px;color:#ffffff;font-weight:normal;font-style:normal;font-family:'Liberation Sans', sans-serif;letter-spacing:0px;transform:scaleX(1.1706);transform-origin:0 0;">0</div>
<svg class="r" style="left:123.4px;top:555px;" width="11" height="11" viewBox="0 0 11 11"><path d="M5.2 0.8 L10 9.8 H0.5 Z" fill="none" stroke="#fff" stroke-width="1"/><path d="M5.2 3.8 V6.8 M5.2 7.8 V8.8" stroke="#fff" stroke-width="1"/></svg>
<div class="t" style="left:135.4px;top:555.6px;font-size:9px;line-height:9px;color:#ffffff;font-weight:normal;font-style:normal;font-family:'Liberation Sans', sans-serif;letter-spacing:0px;transform:scaleX(1.1706);transform-origin:0 0;">0</div>
<svg class="r" style="left:152.5px;top:554.5px;" width="11" height="11" viewBox="0 0 11 11"><path d="M4 1.5 L10.5 5.5 L4 9.5 Z" fill="none" stroke="#fff" stroke-width="1"/><rect x="0.5" y="6.5" width="3.5" height="3.5" fill="none" stroke="#fff" stroke-width="1"/></svg>
<svg class="r" style="left:175.7px;top:554.5px;" width="11" height="11" viewBox="0 0 11 11"><path d="M1 5 C2 1.5 7 1 8.5 3 L9.5 1.5 L10 5 L6.5 5 L7.8 4 C6.5 2.5 3 3 2.5 6 M2 9.5 L4 6.5 L6 7.5" fill="none" stroke="#fff" stroke-width="1.1"/><circle cx="6.5" cy="8.5" r="1.5" fill="none" stroke="#fff" stroke-width="1"/></svg>
<div class="t" style="left:188.6px;top:555.6px;font-size:9px;line-height:9px;color:#ffffff;font-weight:normal;font-style:normal;font-family:'Liberation Sans', sans-serif;letter-spacing:0px;transform:scaleX(0.9461);transform-origin:0 0;">Live Share</div>
<div class="t" style="left:518.0px;top:555.8px;font-size:9px;line-height:9px;color:#ffffff;font-weight:normal;font-style:normal;font-family:'Liberation Sans', sans-serif;letter-spacing:0px;transform:scaleX(0.9441);transform-origin:0 0;">Ln 14, Col 1</div>
<div class="t" style="left:576.6px;top:555.8px;font-size:9px;line-height:9px;color:#ffffff;font-weight:normal;font-style:normal;font-family:'Liberation Sans', sans-serif;letter-spacing:0px;transform:scaleX(0.9263);transform-origin:0 0;">Spaces: 4</div>
<div class="t" style="left:626.5px;top:555.8px;font-size:9px;line-height:9px;color:#ffffff;font-weight:normal;font-style:normal;font-family:'Liberation Sans', sans-serif;letter-spacing:0px;transform:scaleX(0.9384);transform-origin:0 0;">UTF-8</div>
<div class="t" style="left:662.4px;top:555.8px;font-size:9px;line-height:9px;color:#ffffff;font-weight:normal;font-style:normal;font-family:'Liberation Sans', sans-serif;letter-spacing:0px;transform:scaleX(0.8452);transform-origin:0 0;">LF</div>
<div class="t" style="left:683.3px;top:555.8px;font-size:9px;line-height:9px;color:#ffffff;font-weight:normal;font-style:normal;font-family:'Liberation Sans', sans-serif;letter-spacing:0px;transform:scaleX(0.8543);transform-origin:0 0;">Java</div>
<svg class="r" style="left:898.6px;top:555px;" width="10.5" height="11" viewBox="0 0 10.5 11"><path d="M0.5 0.5 H9.5 V6.5 H4 L1.5 9 V6.5 H0.5 Z" fill="none" stroke="#fff" stroke-width="1"/><path d="M3 6.5 L6 9.5" stroke="#fff" stroke-width="1"/></svg>
<svg class="r" style="left:920.8px;top:554.7px;" width="10" height="11" viewBox="0 0 10 11"><path d="M1.5 8 V5 C1.5 2.5 3 1 5 1 C7 1 8.5 2.5 8.5 5 V8 L9.5 9 H0.5 Z M4 9.5 C4 10.5 6 10.5 6 9.5" fill="none" stroke="#fff" stroke-width="1"/></svg>
<div class="r" style="left:7px;top:210px;width:259px;height:251px;background:#7a6a64;"></div>
<div class="r" style="left:8px;top:211px;width:257px;height:249px;background:#eeeeee;"></div>
<div class="r" style="left:8px;top:211px;width:257px;height:24px;background:#ffffff;"></div>
<svg class="r" style="left:14.5px;top:216.5px;" width="13" height="13" viewBox="0 0 13 13"><rect x="0.5" y="0.5" width="12" height="12" rx="1.5" fill="#dfe6ee" stroke="#7d8a99" stroke-width="1"/><path d="M5 7 C6 5 8 4.5 7 2 M6.8 6.8 C8 5.5 8.5 4.5 7.8 3.5" fill="none" stroke="#e76f00" stroke-width="1.1"/><path d="M3 8 H9 V9.5 C9 10.5 3 10.5 3 9.5 Z M9 8.3 C10.5 8.3 10.5 9.8 9 9.8" fill="none" stroke="#5382a1" stroke-width="0.9"/></svg>
<div class="t" style="left:31.80px;top:217.83px;font-size:9.3px;line-height:9.3px;color:#1a1a1a;font-weight:normal;font-style:normal;font-family:'Liberation Sans', sans-serif;transform:scaleX(0.9558);transform-origin:0 0;">VISAGE ANIME</div>
<div class="r" style="left:168px;top:222px;width:9px;height:1px;background:#222222;"></div>
<svg class="r" style="left:205px;top:218px;" width="9" height="9" viewBox="0 0 9 9"><rect x="0.5" y="0.5" width="8" height="8" fill="none" stroke="#222" stroke-width="1"/></svg>
<svg class="r" style="left:241.5px;top:217.5px;" width="10" height="10" viewBox="0 0 10 10"><path d="M0.5 0.5 L9.5 9.5 M9.5 0.5 L0.5 9.5" stroke="#222" stroke-width="1.1"/></svg>
<svg class="r" style="left:80px;top:306.8px;" width="44" height="44" viewBox="0 0 44 44"><circle cx="22" cy="22" r="20.8" fill="#ffafaf" stroke="#333" stroke-width="1"/><circle cx="13.2" cy="14" r="4" fill="none" stroke="#333" stroke-width="1"/><circle cx="29.9" cy="14" r="4" fill="none" stroke="#333" stroke-width="1"/><path d="M11 28.7 H33" stroke="#333" stroke-width="1"/></svg>
<svg class="r" style="left:0px;top:0px;" width="948" height="634" viewBox="0 0 948 634"><path d="M760 97 L865.7 45" stroke="#00b050" stroke-width="2" fill="none"/><circle cx="865.7" cy="45" r="3.8" fill="#00b050"/><path d="M767.8 151.4 C776 172 782 195 782 206 C782 222 772 236 753.6 243.2 C735 249 700 249.5 660 247.5 C620 245 590 242 550 242 C500 242 460 243 441 247.4 C432 249.5 427 251 427.4 251.5" stroke="#00b050" stroke-width="2" fill="none"/><circle cx="430.7" cy="257.6" r="4" fill="#00b050"/><path d="M495 524 L534.5 585" stroke="#00b050" stroke-width="2" fill="none"/><circle cx="495" cy="524" r="4" fill="#00b050"/><path d="M856 512 L920 411" stroke="#00b050" stroke-width="2" fill="none"/><circle cx="920" cy="411" r="4" fill="#00b050"/></svg>
<div class="r" style="left:641px;top:97px;width:170px;height:27px;background:#c5e0b4;"></div>
<div class="t" style="left:650.70px;top:104.87px;font-size:12.2px;line-height:12.2px;color:#262626;font-weight:normal;font-style:normal;font-family:'Liberation Sans', sans-serif;transform:scaleX(1.0588);transform-origin:0 0;">lancement de l'exécution</div>
<svg class="r" style="left:749px;top:115.80000000000001px;" width="36" height="36" viewBox="0 0 36 36"><circle cx="18" cy="18" r="15" fill="#ffff00" stroke="#ff0000" stroke-width="4"/><text x="18" y="25.5" font-size="21" font-weight="bold" text-anchor="middle" fill="#000" font-family="Liberation Sans">1</text></svg>
<div class="r" style="left:415px;top:323px;width:328px;height:43px;background:#c5e0b4;"></div>
<div class="t" style="left:424.80px;top:330.27px;font-size:12.2px;line-height:12.2px;color:#262626;font-weight:normal;font-style:normal;font-family:'Liberation Sans', sans-serif;transform:scaleX(1.0366);transform-origin:0 0;">Un terminal est ouvert et la JVM est exécutée avec la</div>
<div class="t" style="left:424.80px;top:346.87px;font-size:12.2px;line-height:12.2px;color:#262626;font-weight:normal;font-style:normal;font-family:'Liberation Sans', sans-serif;transform:scaleX(0.9355);transform-origin:0 0;">classe</div>
<div class="t" style="left:461.30px;top:348.45px;font-size:12.2px;line-height:12.2px;color:#262626;font-weight:normal;font-style:normal;font-family:'Liberation Mono', monospace;transform:scaleX(1.0326);transform-origin:0 0;-webkit-text-stroke-width:0.35px;">AppliVisage1</div>
<div class="t" style="left:556.20px;top:346.87px;font-size:12.2px;line-height:12.2px;color:#262626;font-weight:normal;font-style:normal;font-family:'Liberation Sans', sans-serif;transform:scaleX(1.0300);transform-origin:0 0;">comme classe principale</div>
<svg class="r" style="left:374px;top:335px;" width="36" height="36" viewBox="0 0 36 36"><circle cx="18" cy="18" r="15" fill="#ffff00" stroke="#ff0000" stroke-width="4"/><text x="18" y="25.5" font-size="21" font-weight="bold" text-anchor="middle" fill="#000" font-family="Liberation Sans">2</text></svg>
<div class="r" style="left:62px;top:425px;width:196px;height:44px;background:#c5e0b4;"></div>
<div class="t" style="left:71.60px;top:433.47px;font-size:12.2px;line-height:12.2px;color:#262626;font-weight:normal;font-style:normal;font-family:'Liberation Sans', sans-serif;transform:scaleX(1.0403);transform-origin:0 0;">L'application est lancée et</div>
<div class="t" style="left:71.60px;top:449.77px;font-size:12.2px;line-height:12.2px;color:#262626;font-weight:normal;font-style:normal;font-family:'Liberation Sans', sans-serif;transform:scaleX(1.0212);transform-origin:0 0;">s'exécute</div>
<svg class="r" style="left:237.2px;top:427px;" width="36" height="36" viewBox="0 0 36 36"><circle cx="18" cy="18" r="15" fill="#ffff00" stroke="#ff0000" stroke-width="4"/><text x="18" y="25.5" font-size="21" font-weight="bold" text-anchor="middle" fill="#000" font-family="Liberation Sans">3</text></svg>
<div class="r" style="left:356px;top:509px;width:72px;height:30px;background:#c0c0c0;border-radius:5px"></div>
<div class="t" style="left:369.0px;top:513.9px;font-size:20px;line-height:20px;color:#1a1a1a;font-weight:normal;font-style:normal;font-family:'Liberation Sans', sans-serif;letter-spacing:0px;transform:scaleX(0.8889);transform-origin:0 0;-webkit-text-stroke-width:0.25px;">CTRL</div>
<svg class="r" style="left:432.8px;top:517.2px;" width="15" height="15" viewBox="0 0 15 15"><path d="M7.2 0 V14.5 M0 7.25 H14.5" stroke="#a6a6a6" stroke-width="3"/></svg>
<div class="r" style="left:451px;top:509px;width:29px;height:30px;background:#c0c0c0;border-radius:5px"></div>
<div class="t" style="left:460.0px;top:513.9px;font-size:20px;line-height:20px;color:#1a1a1a;font-weight:normal;font-style:normal;font-family:'Liberation Sans', sans-serif;letter-spacing:0px;transform:scaleX(0.8194);transform-origin:0 0;-webkit-text-stroke-width:0.25px;">C</div>
<div class="r" style="left:455px;top:584px;width:226px;height:44px;background:#c5e0b4;"></div>
<div class="t" style="left:464.70px;top:591.77px;font-size:12.2px;line-height:12.2px;color:#262626;font-weight:normal;font-style:normal;font-family:'Liberation Sans', sans-serif;transform:scaleX(1.0775);transform-origin:0 0;">interruption de l'exécution en</div>
<div class="t" style="left:464.70px;top:608.77px;font-size:12.2px;line-height:12.2px;color:#262626;font-weight:normal;font-style:normal;font-family:'Liberation Sans', sans-serif;transform:scaleX(1.0076);transform-origin:0 0;">tapant CTRL + C dans le terminal</div>
<svg class="r" style="left:671px;top:566.8px;" width="36" height="36" viewBox="0 0 36 36"><circle cx="18" cy="18" r="15" fill="#ffff00" stroke="#ff0000" stroke-width="4"/><text x="18" y="25.5" font-size="21" font-weight="bold" text-anchor="middle" fill="#000" font-family="Liberation Sans">4</text></svg>
<div class="r" style="left:700px;top:512px;width:201px;height:61px;background:#c5e0b4;"></div>
<div class="t" style="left:710.00px;top:519.67px;font-size:12.2px;line-height:12.2px;color:#262626;font-weight:normal;font-style:normal;font-family:'Liberation Sans', sans-serif;transform:scaleX(1.0826);transform-origin:0 0;">interruption de l'exécution en</div>
<div class="t" style="left:710.00px;top:536.87px;font-size:12.2px;line-height:12.2px;color:#262626;font-weight:normal;font-style:normal;font-family:'Liberation Sans', sans-serif;transform:scaleX(1.0409);transform-origin:0 0;">terminant (Kill) le processus</div>
<div class="t" style="left:710.12px;top:553.97px;font-size:12.2px;line-height:12.2px;color:#262626;font-weight:normal;font-style:italic;font-family:'Liberation Sans', sans-serif;transform:scaleX(0.9522);transform-origin:0 0;">Java Process Console</div>
<svg class="r" style="left:928.5px;top:406.5px;" width="13" height="18" viewBox="0 0 13 18"><path d="M4 1.4 C4 0.1 6.4 0.1 6.4 1.4 V6.6 C6.4 5.6 8.5 5.6 8.5 6.6 V7.3 C8.5 6.3 10.5 6.3 10.5 7.3 V8.1 C10.5 7.1 12.4 7.1 12.4 8.1 V12.6 C12.4 14.6 11.6 16 10.6 17 H5.2 C4.2 16 2.6 14 0.9 11.9 C0.2 10.9 1.3 9.7 2.3 10.5 L4 11.9 Z" fill="#fff" stroke="#000" stroke-width="0.9"/></svg>
<div class="r" style="left:931px;top:74px;width:11px;height:278px;background:#232323;"></div>
<div class="r" style="left:931px;top:74px;width:1px;height:278px;background:#2b2b2b;"></div>
<div class="r" style="left:932px;top:121px;width:10px;height:2px;background:#9a9a9a;"></div>
<div class="r" style="left:886.1px;top:73.6px;width:3.7999999999999545px;height:1.2000000000000028px;background:rgba(86,156,214,0.5);"></div>
<div class="r" style="left:890.8px;top:73.6px;width:19.90000000000009px;height:1.2000000000000028px;background:rgba(200,200,200,0.3);"></div>
<div class="r" style="left:890.8px;top:75.5px;width:20.90000000000009px;height:1.2000000000000028px;background:rgba(200,200,200,0.3);"></div>
<div class="r" style="left:888.0px;top:80.6px;width:38.799999999999955px;height:1.2000000000000028px;background:rgba(110,150,90,0.4);"></div>
<div class="r" style="left:888.0px;top:82.1px;width:43.60000000000002px;height:1.2000000000000028px;background:rgba(110,150,90,0.4);"></div>
<div class="r" style="left:888.0px;top:83.6px;width:36.89999999999998px;height:1.2000000000000028px;background:rgba(110,150,90,0.4);"></div>
<div class="r" style="left:888.0px;top:85.5px;width:5.7000000000000455px;height:1.2000000000000028px;background:rgba(86,156,214,0.5);"></div>
<div class="r" style="left:894.6px;top:85.5px;width:9.5px;height:1.2000000000000028px;background:rgba(110,150,90,0.4);"></div>
<div class="r" style="left:888.0px;top:87.2px;width:5.7000000000000455px;height:1.2000000000000028px;background:rgba(86,156,214,0.5);"></div>
<div class="r" style="left:886.1px;top:92.5px;width:8.5px;height:1.2000000000000028px;background:rgba(86,156,214,0.5);"></div>
<div class="r" style="left:895.6px;top:92.5px;width:10.399999999999977px;height:1.2000000000000028px;background:rgba(200,200,200,0.3);"></div>
<div class="r" style="left:886.1px;top:94.4px;width:45.5px;height:1.1999999999999886px;background:rgba(60,110,170,0.8);"></div>
<div class="r" style="left:888.9px;top:97.3px;width:30.300000000000068px;height:1.2000000000000028px;background:rgba(110,150,90,0.4);"></div>
<div class="r" style="left:888.9px;top:100.1px;width:13.300000000000068px;height:1.2000000000000028px;background:rgba(86,156,214,0.5);"></div>
<div class="r" style="left:903.1px;top:100.1px;width:16.100000000000023px;height:1.2000000000000028px;background:rgba(200,200,200,0.3);"></div>
<div class="r" style="left:891.8px;top:103.9px;width:16.100000000000023px;height:1.1999999999999886px;background:rgba(86,156,214,0.5);"></div>
<div class="r" style="left:908.8px;top:103.9px;width:16.100000000000023px;height:1.1999999999999886px;background:rgba(206,145,120,0.45);"></div>
<div class="r" style="left:891.8px;top:105.8px;width:39.80000000000007px;height:1.2000000000000028px;background:rgba(200,200,200,0.3);"></div>
<div class="r" style="left:891.8px;top:107.7px;width:16.100000000000023px;height:1.2000000000000028px;background:rgba(200,200,200,0.3);"></div>
<div class="r" style="left:891.8px;top:110.5px;width:12.300000000000068px;height:1.2000000000000028px;background:rgba(200,200,200,0.3);"></div>
<div class="r" style="left:905.0px;top:110.5px;width:26.600000000000023px;height:1.2000000000000028px;background:rgba(110,150,90,0.4);"></div>
<div class="r" style="left:891.8px;top:112.4px;width:10.400000000000091px;height:1.1999999999999886px;background:rgba(200,200,200,0.3);"></div>
<div class="r" style="left:891.8px;top:116.2px;width:18.0px;height:1.2000000000000028px;background:rgba(200,200,200,0.3);"></div>
<div class="r" style="left:891.8px;top:118.1px;width:19.90000000000009px;height:1.2000000000000028px;background:rgba(200,200,200,0.3);"></div>
<div class="r" style="left:891.8px;top:121.0px;width:11.300000000000068px;height:1.2000000000000028px;background:rgba(86,156,214,0.5);"></div>
<div class="r" style="left:904.1px;top:121.0px;width:13.199999999999932px;height:1.2000000000000028px;background:rgba(200,200,200,0.3);"></div>
<div class="r" style="left:891.8px;top:122.8px;width:25.5px;height:1.2000000000000028px;background:rgba(200,200,200,0.3);"></div>
<div class="r" style="left:891.8px;top:125.7px;width:12.300000000000068px;height:1.2000000000000028px;background:rgba(200,200,200,0.3);"></div>
<div class="r" style="left:905.0px;top:125.7px;width:18.0px;height:1.2000000000000028px;background:rgba(110,150,90,0.4);"></div>
<div class="r" style="left:891.8px;top:127.6px;width:16.100000000000023px;height:1.200000000000017px;background:rgba(200,200,200,0.3);"></div>
<div class="r" style="left:891.8px;top:130.4px;width:14.200000000000045px;height:1.1999999999999886px;background:rgba(200,200,200,0.3);"></div>
<div class="r" style="left:906.9px;top:130.4px;width:24.700000000000045px;height:1.1999999999999886px;background:rgba(110,150,90,0.4);"></div>
<div class="r" style="left:891.8px;top:132.3px;width:39.80000000000007px;height:1.1999999999999886px;background:rgba(110,150,90,0.4);"></div>
<div class="r" style="left:891.8px;top:134.2px;width:8.5px;height:1.200000000000017px;background:rgba(86,156,214,0.5);"></div>
<div class="r" style="left:894.6px;top:136.1px;width:13.299999999999955px;height:1.200000000000017px;background:rgba(200,200,200,0.3);"></div>
<div class="r" style="left:908.8px;top:136.1px;width:22.800000000000068px;height:1.200000000000017px;background:rgba(110,150,90,0.4);"></div>
<div class="r" style="left:894.6px;top:138.0px;width:13.299999999999955px;height:1.1999999999999886px;background:rgba(200,200,200,0.3);"></div>
<div class="r" style="left:894.6px;top:141.8px;width:13.299999999999955px;height:1.1999999999999886px;background:rgba(200,200,200,0.3);"></div>
<div class="r" style="left:908.8px;top:141.8px;width:22.800000000000068px;height:1.1999999999999886px;background:rgba(110,150,90,0.4);"></div>
<div class="r" style="left:894.6px;top:143.7px;width:9.5px;height:1.200000000000017px;background:rgba(200,200,200,0.3);"></div>
<div class="r" style="left:894.6px;top:146.5px;width:11.399999999999977px;height:1.1999999999999886px;background:rgba(200,200,200,0.3);"></div>
<div class="r" style="left:906.9px;top:146.5px;width:12.300000000000068px;height:1.1999999999999886px;background:rgba(110,150,90,0.4);"></div>
<div class="r" style="left:894.6px;top:148.4px;width:9.5px;height:1.1999999999999886px;background:rgba(200,200,200,0.3);"></div>
<div class="r" style="left:894.6px;top:152.2px;width:11.399999999999977px;height:1.200000000000017px;background:rgba(200,200,200,0.3);"></div>
<div class="r" style="left:906.9px;top:152.2px;width:24.700000000000045px;height:1.200000000000017px;background:rgba(110,150,90,0.4);"></div>
<div class="r" style="left:894.6px;top:154.1px;width:8.5px;height:1.200000000000017px;background:rgba(200,200,200,0.3);"></div>
<div class="r" style="left:888.9px;top:156.9px;width:3.800000000000068px;height:1.1999999999999886px;background:rgba(200,200,200,0.3);"></div>
<div class="r" style="left:886.1px;top:162.6px;width:12.299999999999955px;height:1.200000000000017px;background:rgba(110,150,90,0.4);"></div>
</body></html>
